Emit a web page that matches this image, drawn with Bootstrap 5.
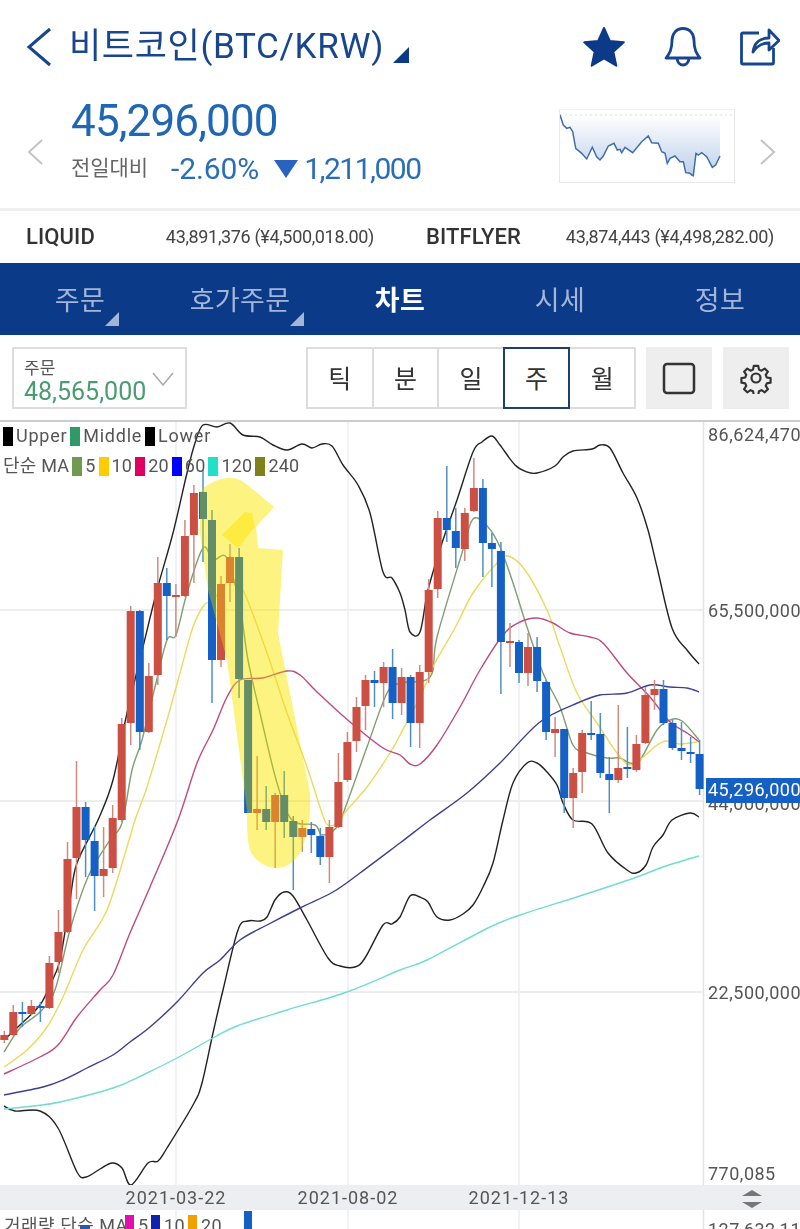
<!DOCTYPE html>
<html lang="ko">
<head>
  <meta charset="UTF-8" />
  <meta name="viewport" content="width=device-width, initial-scale=1.0"/>
  <title>비트코인 차트</title>
  <link rel="stylesheet" href="https://cdn.jsdelivr.net/npm/bootstrap@5.3.2/dist/css/bootstrap.min.css" />
  <style>
    html, body { height: 1229px; overflow: hidden; }
    body {
      background: #fff;
      font-family: Roboto, "Noto Sans CJK KR", sans-serif;
      color: #555;
    }
    .top-bar { height: 95px; padding: 26px 20px 0 26px; }
    .coin-title { font-size: 35px; line-height: 42px; color: #17468f; letter-spacing: .65px; margin: 0 0 0 17px; font-weight: 400; }
    .top-icons { gap: 38px; }
    .price-row { height: 116px; border-bottom: 3px solid #efefef; padding: 0 24px 0 27px; }
    .price-main { font-size: 44px; line-height: 48px; color: #1f66b5; letter-spacing: -.85px; margin-top: 2px; }
    .price-info { margin-left: 27px; }
    .diff-row { margin-top: 4px; }
    .diff-label { font-size: 21px; color: #666; letter-spacing: -.1px; width: 100px; }
    .diff-pct { font-size: 30px; line-height: 40px; color: #2a6eb8; letter-spacing: -.1px; }
    .diff-abs { font-size: 30px; line-height: 40px; color: #2a6eb8; letter-spacing: -1.5px; }
    .diff-tri { margin: 0 6px 0 15px; }
    .spark-box { box-sizing: content-box; width: 174px; height: 72px; margin-right: 24px; margin-top: -11px; border: 1px solid #e8e8e8; border-top-color: #f3f3f3; display: block; }
    .exch-row { height: 52px; padding: 0 26px 2px; gap: 52px; }
    .exch-col { flex: 1 1 0; }
    .exch-name { font-size: 22px; font-weight: 500; color: #333; letter-spacing: .1px; }
    .exch-val { font-size: 18px; color: #444; letter-spacing: -.35px; }
    .tab-bar { height: 72px; background: #0b3a88; }
    .tab-bar .nav-link { color: #a3b6d8; font-size: 27px; padding: 0; line-height: 76px; height: 72px; position: relative; letter-spacing: .3px; }
    .tab-bar .nav-link.active-tab { color: #fff; font-weight: 700; }
    .tab-corner { position: absolute; left: 105px; top: 49px; }
    .tab-corner2 { left: 130px; }
    .tool-bar { height: 85px; padding: 12px 11px 0 12px; }
    .order-box { width: 175px; height: 62px; border: 2px solid #ddd; padding: 9px 10px 0; position: relative; }
    .order-lbl { font-size: 17px; line-height: 20px; color: #555; }
    .order-val { font-size: 25px; line-height: 28px; color: #4b9c70; letter-spacing: 0; }
    .order-arrow { position: absolute; right: 11px; top: 23px; }
    .tool-right { gap: 11px; }
    .term-group { margin-right: -1px; }
    .btn-group.term-group > .btn {
      width: 67.6px; height: 62px; padding: 3px 0 0; font-size: 25px; color: #333; flex: 0 0 auto;
      border: 2px solid #ddd; border-radius: 0; background: #fff;
    }
    .btn-group.term-group > .btn:not(:first-child) { margin-left: -2px; }
    .btn-group.term-group > .btn.term-on { border-color: #1c3f6e; position: relative; z-index: 2; }
    .sq-btn { width: 66px; height: 62px; background: #eee; }
    .chart-wrap { height: 809px; position: relative; border-top: 2px solid #ccc; overflow: hidden; }
    .chart-svg { display: block; }
    .chart-legend { position: absolute; left: 3px; top: -1px; font-size: 18px; line-height: 30px; color: #555; letter-spacing: .2px; }
    .leg-row { display: flex; align-items: center; height: 30px; }
    .leg-row-wide { letter-spacing: .75px; }
    .sw { display: inline-block; width: 10px; height: 19px; margin: 0 3px 0 3px; }
    .ax { font-family: Roboto, "Noto Sans CJK KR", sans-serif; font-size: 18px; fill: #555; letter-spacing: .5px; }
    .ax-date { letter-spacing: 1px; }
    .ax-on { fill: #fff; }
    .pen-multi { mix-blend-mode: multiply; }
  </style>
</head>
<body>

  <!-- 상단 타이틀 -->
  <div class="top-bar d-flex justify-content-between align-items-start">
    <div class="d-flex align-items-center">
      <svg width="26" height="40" viewBox="0 0 26 40"><path d="M24 2 3 20l21 18" fill="none" stroke="#17468f" stroke-width="3"/></svg>
      <h1 class="coin-title">비트코인(BTC/KRW)</h1>
      <svg class="ms-2 mt-3" width="18" height="18" viewBox="0 0 18 18"><path d="M17 1v16H1z" fill="#0b3a88"/></svg>
    </div>
    <div class="d-flex top-icons">
      <svg width="44" height="42" viewBox="0 0 44 42"><path d="M22 2l5.800 13 14 1.300-10.500 9.500 3 13.900L22 32.500 9.700 39.700l3-13.900L2.200 16.300l14-1.300z" fill="#0b3a88" stroke="#0b3a88" stroke-width="2" stroke-linejoin="round"/></svg>
      <svg width="38" height="42" viewBox="0 0 38 42"><path d="M19 2.500c-7 0-11 5.500-11 12 0 9-2.500 13-6 17.500h34c-3.500-4.500-6-8.500-6-17.500 0-6.500-4-12-11-12zM13 32.500c.5 4 3 6.500 6 6.500s5.500-2.500 6-6.500" fill="none" stroke="#17468f" stroke-width="2.800" stroke-linejoin="round"/></svg>
      <svg width="40" height="40" viewBox="0 0 40 40"><path d="M19 7H3a1.500 1.500 0 0 0-1.500 1.500v28A1.500 1.500 0 0 0 3 38h29a1.500 1.500 0 0 0 1.500-1.500V22" fill="none" stroke="#17468f" stroke-width="2.800"/><path d="M13 26c1-9 7-14 16-14V4l10 10.500L29 24v-7c-7 0-12 3-16 9z" fill="#fff" stroke="#17468f" stroke-width="2.800" stroke-linejoin="round"/></svg>
    </div>
  </div>

  <!-- 현재가 -->
  <div class="price-row d-flex align-items-start">
    <svg class="flex-shrink-0 align-self-center" width="17" height="26" viewBox="0 0 17 26"><path d="M15 1 2 13l13 12" fill="none" stroke="#c4c4c4" stroke-width="2"/></svg>
    <div class="price-info flex-grow-1">
      <div class="price-main">45,296,000</div>
      <div class="diff-row d-flex align-items-center">
        <span class="diff-label">전일대비</span>
        <span class="diff-pct">-2.60%</span>
        <svg class="diff-tri" width="24" height="18" viewBox="0 0 24 18"><path d="M0 0h24L12 18z" fill="#2a62c0"/></svg>
        <span class="diff-abs">1,211,000</span>
      </div>
    </div>
    <svg class="spark-box align-self-center" viewBox="0 0 174 72">
      <defs><linearGradient id="sparkFill" x1="0" y1="0" x2="0" y2="1"><stop offset="0" stop-color="#fff"/><stop offset="1" stop-color="#bcd0ea"/></linearGradient></defs>
      <path id="sparkArea" fill="url(#sparkFill)"/>
      <path d="M0 5h174" stroke="#ddd" stroke-dasharray="2 3"/>
      <path id="sparkLine" fill="none" stroke="#3f6fa8" stroke-width="1.500"/>
    </svg>
    <svg class="flex-shrink-0 align-self-center" width="17" height="26" viewBox="0 0 17 26"><path d="M2 1l13 12L2 25" fill="none" stroke="#c4c4c4" stroke-width="2"/></svg>
  </div>

  <!-- 해외 거래소 시세 -->
  <div class="exch-row d-flex align-items-center">
    <div class="exch-col d-flex justify-content-between align-items-center">
      <span class="exch-name">LIQUID</span>
      <span class="exch-val">43,891,376 (¥4,500,018.00)</span>
    </div>
    <div class="exch-col d-flex justify-content-between align-items-center">
      <span class="exch-name">BITFLYER</span>
      <span class="exch-val">43,874,443 (¥4,498,282.00)</span>
    </div>
  </div>

  <!-- 탭 -->
  <nav class="nav nav-justified tab-bar">
    <a class="nav-link" href="#">주문<svg class="tab-corner" width="14" height="14" viewBox="0 0 14 14"><path d="M14 0v14H0z" fill="#a3b6d8"/></svg></a>
    <a class="nav-link" href="#">호가주문<svg class="tab-corner tab-corner2" width="14" height="14" viewBox="0 0 14 14"><path d="M14 0v14H0z" fill="#a3b6d8"/></svg></a>
    <a class="nav-link active-tab" href="#">차트</a>
    <a class="nav-link" href="#">시세</a>
    <a class="nav-link" href="#">정보</a>
  </nav>

  <!-- 차트 옵션 -->
  <div class="tool-bar d-flex justify-content-between">
    <div class="order-box">
      <div class="order-lbl">주문</div>
      <div class="order-val">48,565,000</div>
      <svg class="order-arrow" width="22" height="14" viewBox="0 0 22 14"><path d="M1 1l10 12L21 1" fill="none" stroke="#aaa" stroke-width="1.500"/></svg>
    </div>
    <div class="d-flex tool-right ms-auto">
      <div class="btn-group term-group">
        <button type="button" class="btn">틱</button>
        <button type="button" class="btn">분</button>
        <button type="button" class="btn">일</button>
        <button type="button" class="btn term-on">주</button>
        <button type="button" class="btn">월</button>
      </div>
      <div class="sq-btn d-flex align-items-center justify-content-center">
        <svg width="34" height="33" viewBox="0 0 34 33"><rect x="2" y="2" width="30" height="29" rx="3" fill="none" stroke="#333" stroke-width="2.500"/></svg>
      </div>
      <div class="sq-btn d-flex align-items-center justify-content-center">
        <svg width="32" height="32" viewBox="0 0 32 32"><path d="M13.500 2.500h5l.8 4.200 2.800 1.200 3.600-2.400 3.500 3.500-2.400 3.600 1.200 2.800 4.200.8v5l-4.200.8-1.200 2.800 2.400 3.600-3.500 3.500-3.600-2.400-2.800 1.200-.8 4.200h-5l-.8-4.200-2.800-1.200-3.600 2.400-3.500-3.500 2.400-3.600-1.200-2.800-4.200-.8v-5l4.200-.8 1.200-2.800-2.400-3.600 3.500-3.500 3.600 2.400 2.800-1.200z" transform="translate(1.600 1.600) scale(.9)" fill="none" stroke="#333" stroke-width="2.400" stroke-linejoin="round"/><circle cx="16" cy="16" r="4.500" fill="none" stroke="#333" stroke-width="2.200"/></svg>
      </div>
    </div>
  </div>

  <!-- 차트 -->
  <div class="chart-wrap">
    <svg id="chart" class="chart-svg" width="800" height="807" viewBox="0 422 800 807"></svg>
    <div class="chart-legend">
      <div class="leg-row leg-row-wide"><span class="sw" style="background:#000;margin-left:0"></span>Upper<span class="sw" style="background:#2e9a68"></span>Middle<span class="sw" style="background:#000"></span>Lower</div>
      <div class="leg-row">단순 MA<span class="sw" style="background:#6f9a50"></span>5<span class="sw" style="background:#fc0"></span>10<span class="sw" style="background:#e0005f"></span>20<span class="sw" style="background:#00f"></span>60<span class="sw" style="background:#20e0c8"></span>120<span class="sw" style="background:#80801a"></span>240</div>
    </div>
  </div>

  <script src="https://cdn.jsdelivr.net/npm/bootstrap@5.3.2/dist/js/bootstrap.bundle.min.js"></script>
  <script>
    // 스파크라인 (화면 좌표로 읽은 값)
    const spark = [[60,315],[70,345],[80,355],[90,352],[98,365],[107,415],[125,430],[140,447],[157,412],[170,440],[180,450],[190,438],[205,408],[222,400],[232,420],[240,418],[245,428],[255,412],[278,428],[305,395],[325,378],[335,398],[355,400],[365,425],[375,430],[382,460],[390,445],[405,438],[420,455],[430,455],[437,488],[450,490],[455,495],[460,497],[468,430],[475,435],[485,428],[500,440],[517,472],[527,465],[540,438]]
      .map(p => [p[0] / 3 - 20, p[1] / 3 - 100]);
    const sparkD = spark.map((p, i) => (i ? "L" : "M") + p[0].toFixed(1) + " " + p[1].toFixed(1)).join("");
    document.getElementById("sparkLine").setAttribute("d", sparkD);
    document.getElementById("sparkArea").setAttribute("d", sparkD + "L" + spark[spark.length - 1][0].toFixed(1) + " 5L0 5Z");

    // 캔들: [몸통위, 몸통아래, 꼬리위, 꼬리아래, 색]
    const candles = [
      [1035,1040,1031,1043,"r"],[1012,1035,1005,1036,"r"],[1012,1014,1002,1027,"b"],[1006,1014,1000,1015,"r"],
      [1006,1008,1002,1022,"b"],[963,1008,956,1009,"r"],[932,962,910,973,"r"],[859,932,842,933,"r"],
      [807,858,761,899,"r"],[807,840,802,877,"b"],[841,876,826,911,"b"],[869,876,827,897,"r"],
      [818,868,805,873,"r"],[724,820,718,822,"r"],[611,723,606,745,"r"],[611,732,610,750,"b"],
      [676,732,663,733,"r"],[583,675,557,685,"r"],[583,596,568,640,"b"],[595,597,584,637,"r"],
      [536,596,520,597,"r"],[493,535,485,583,"r"],[492,519,470,562,"b"],[520,660,510,703,"b"],
      [584,660,576,667,"r"],[557,583,544,602,"r"],[557,679,548,698,"b"],[680,813,680,813,"b"],
      [809,813,756,830,"r"],[809,822,786,830,"b"],[795,822,793,868,"r"],[795,822,771,838,"b"],
      [821,837,816,890,"b"],[828,837,820,852,"r"],[829,835,822,853,"b"],[836,857,828,865,"b"],
      [827,857,820,883,"r"],[782,827,753,828,"r"],[742,780,732,782,"r"],[707,741,697,752,"r"],
      [680,706,675,730,"r"],[680,683,671,707,"b"],[667,683,662,707,"r"],[667,703,649,719,"b"],
      [677,703,668,715,"r"],[677,723,675,747,"b"],[672,723,665,748,"r"],[590,672,579,683,"r"],
      [518,589,511,598,"r"],[518,530,466,542,"b"],[531,548,508,568,"b"],[513,549,508,561,"r"],
      [488,511,458,512,"r"],[488,543,479,577,"b"],[543,549,533,587,"b"],[551,642,542,694,"b"],
      [641,642,623,667,"r"],[642,673,640,683,"b"],[647,673,633,686,"r"],[647,681,637,692,"b"],
      [682,732,680,740,"b"],[729,733,717,757,"r"],[729,798,729,813,"b"],[773,798,768,828,"r"],
      [733,772,730,793,"r"],[733,735,701,740,"b"],[734,773,713,778,"b"],[774,780,757,813,"b"],
      [768,780,705,783,"r"],[767,769,727,778,"b"],[744,770,735,772,"r"],[695,743,687,744,"r"],
      [689,695,680,710,"r"],[689,723,680,725,"b"],[723,748,720,750,"b"],[748,751,722,760,"b"],
      [752,753,737,763,"b"],[754,789,740,795,"b"]
    ];

    const lines = [
      ["#222", "4,1040 20,1025 40,1005 50,985 60,960 70,900 77,863 98,820 113,780 127,713 143,647 157,590 173,533 187,473 195,443 203,425 217,427 230,423 243,435 260,437 273,445 287,450 302,444 312,448 322,444 332,446 343,465 358,485 370,513 383,572 392,578 400,593 405,610 410,632 420,632 428,590 442,543 457,500 473,452 482,442 492,436 500,445 515,465 527,472 537,473 555,466 563,457 573,451 592,449 600,445 610,448 623,473 637,498 648,530 657,567 672,628 687,650 699,664"],
      ["#222", "4,1106 15,1111 40,1111 58,1128 77,1172 86,1177 100,1169 112,1163 122,1168 131,1185 148,1163 158,1161 167,1148 193,1105 202,1083 213,1033 223,990 238,930 248,921 260,921 267,917 275,900 284,892 293,896 307,920 328,958 340,966 355,967 365,958 383,925 392,924 400,917 410,896 420,897 428,902 437,917 450,920 463,914 473,905 483,887 493,863 503,820 513,783 527,763 537,763 547,772 557,785 563,803 573,820 592,824 608,853 627,870 636,873 646,865 653,847 663,835 672,820 690,813 699,817"],
      ["#7f9f70", "4,1052 20,1028 40,1012 55,990 70,930 88,877 110,840 122,823 132,770 142,740 155,687 167,640 176,635 187,593 203,548 213,560 227,558 240,607 248,660 260,713 277,783 292,820 315,825 322,835 337,827 347,803 367,747 387,693 400,683 430,677 437,637 462,553 473,519 488,527 500,547 513,583 527,627 543,673 560,707 573,745 587,753 607,758 620,758 630,763 640,760 657,730 670,720 682,721 699,740"],
      ["#ecd95c", "4,1067 27,1050 47,1027 63,997 83,950 107,910 127,847 135,820 147,787 167,720 180,673 193,627 204,605 213,600 230,580 243,590 267,653 287,713 307,767 322,813 328,825 337,823 347,810 367,787 390,753 400,735 420,697 435,663 455,628 473,593 497,563 508,556 525,570 547,610 560,647 577,693 597,723 617,753 630,765 642,758 657,745 667,741 680,744 697,742"],
      ["#bd4a80", "4,1074 40,1057 58,1045 77,1017 100,990 113,975 130,933 150,887 178,820 197,763 213,730 227,697 240,680 263,678 287,671 300,675 317,692 350,722 383,748 400,755 410,764 420,764 437,745 460,707 480,670 503,635 520,622 537,618 553,623 570,633 590,637 603,643 627,673 650,697 670,722 687,733 699,742"],
      ["#3d4090", "4,1095 43,1087 63,1080 87,1068 113,1055 130,1042 150,1027 177,1002 203,973 220,960 240,940 267,925 300,908 333,892 360,873 400,843 430,820 467,793 500,763 540,722 580,702 600,695 627,693 650,685 670,687 687,688 699,692"],
      ["#72dccf", "4,1109 33,1106 60,1102 113,1088 143,1075 177,1058 213,1038 237,1026 287,1010 347,992 400,970 427,960 490,927 520,915 583,895 637,877 663,867 699,856"]
    ];

    // 점들을 부드러운 곡선으로 연결
    function smooth(str) {
      const p = str.split(" ").map(s => s.split(",").map(Number));
      let d = "M" + p[0].join(" ");
      for (let i = 0; i < p.length - 1; i++) {
        const a = p[Math.max(i - 1, 0)], b = p[i], c = p[i + 1], e = p[Math.min(i + 2, p.length - 1)];
        const c1 = [b[0] + (c[0] - a[0]) / 6, b[1] + (c[1] - a[1]) / 6];
        const c2 = [c[0] - (e[0] - b[0]) / 6, c[1] - (e[1] - b[1]) / 6];
        d += "C" + c1[0].toFixed(1) + " " + c1[1].toFixed(1) + " " + c2[0].toFixed(1) + " " + c2[1].toFixed(1) + " " + c[0] + " " + c[1];
      }
      return d;
    }

    let svg = "";
    // 격자
    [610, 801, 992].forEach(y => { svg += `<path d="M0 ${y}H703" stroke="#e8e8e8" stroke-width="1.500"/>`; });
    [176, 348, 519].forEach(x => { svg += `<path d="M${x} 422V1229" stroke="#eceef2" stroke-width="1.500"/>`; });
    svg += '<path d="M703.500 422V1229" stroke="#e3e3e3" stroke-width="1.500"/>';
    // 보조지표
    lines.forEach(l => { svg += `<path d="${smooth(l[1])}" fill="none" stroke="${l[0]}" stroke-width="1.400"/>`; });
    // 캔들
    candles.forEach((c, i) => {
      const x = 4.3 + 9.03 * i;
      const body = c[4] === "r" ? "#cb4f42" : "#1560c5";
      const wick = c[4] === "r" ? "#cf8a80" : "#4f90c4";
      svg += `<path d="M${x.toFixed(1)} ${c[2]}V${c[3]}" stroke="${wick}" stroke-width="1.500"/>`;
      svg += `<rect x="${(x - 4).toFixed(1)}" y="${c[0]}" width="8" height="${Math.max(c[1] - c[0], 2)}" fill="${body}"/>`;
    });
    // 형광펜 표시
    const pen = "M200 492C205 485 218 478 230 478C240 478 245 483 250 487L274 507 256 527 258 548 283 550 278 633 310 793C311 815 308 835 300 853C292 864 285 868 277 868C265 868 254 860 250 850C247 840 247 825 247 810L227 660 208 590 200 533Z";
    svg += `<path d="${pen}" fill="#f8ee50" opacity=".35"/>`;
    svg += `<path class="pen-multi" d="${pen}" fill="#fff9a8"/>`;
    svg += '<path class="pen-multi" d="M222 535 245 512 252 513 255 527 238 548Z" fill="#fff780"/>';
    // 가격축
    [["86,624,470", 441], ["65,500,000", 617], ["22,500,000", 999], ["770,085", 1180]].forEach(a => {
      svg += `<text class="ax" x="708" y="${a[1]}">${a[0]}</text>`;
    });
    svg += '<text class="ax" x="708" y="810">44,000,000</text>';
    svg += '<rect x="706" y="778" width="94" height="25" fill="#1560c5"/><text class="ax ax-on" x="708" y="796">45,296,000</text>';
    // 날짜 띠
    svg += '<rect x="0" y="1185" width="800" height="25" fill="#eceef2"/>';
    [[176, "2021-03-22"], [348, "2021-08-02"], [519, "2021-12-13"]].forEach(a => {
      svg += `<text class="ax ax-date" x="${a[0]}" y="1204" text-anchor="middle">${a[1]}</text>`;
    });
    svg += '<path d="M752 1190l10 6h-20zM752 1208l10-6h-20z" fill="#777"/>';
    // 거래량 범례
    svg += '<rect x="244" y="1211" width="8" height="18" fill="#1560c5"/><rect x="80" y="1225" width="10" height="4" fill="#1560c5"/>';
    svg += '<text class="ax" x="4" y="1232">거래량 단순 MA</text>';
    [[125, "#e010b0", "5"], [151, "#1020b0", "10"], [188, "#f0a000", "20"]].forEach(a => {
      svg += `<rect x="${a[0]}" y="1215" width="9" height="14" fill="${a[1]}"/><text class="ax" x="${a[0] + 13}" y="1232">${a[2]}</text>`;
    });
    svg += '<text class="ax" x="708" y="1236">127,632,111</text>';
    document.getElementById("chart").innerHTML = svg;
  </script>

</body>
</html>
